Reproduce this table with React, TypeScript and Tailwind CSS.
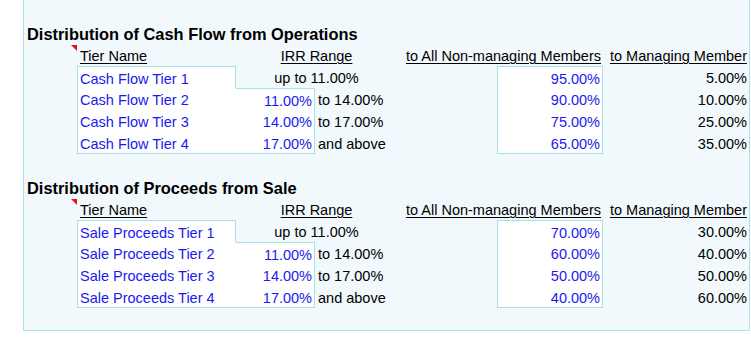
const blue = 'text-[#1a1aee]'

type Tier = { name: string; low: string | null; high: string; members: string; manager: string }

const sections: { title: string; tiers: Tier[] }[] = [
  {
    title: 'Distribution of Cash Flow from Operations',
    tiers: [
      { name: 'Cash Flow Tier 1', low: null, high: 'up to 11.00%', members: '95.00%', manager: '5.00%' },
      { name: 'Cash Flow Tier 2', low: '11.00%', high: 'to 14.00%', members: '90.00%', manager: '10.00%' },
      { name: 'Cash Flow Tier 3', low: '14.00%', high: 'to 17.00%', members: '75.00%', manager: '25.00%' },
      { name: 'Cash Flow Tier 4', low: '17.00%', high: 'and above', members: '65.00%', manager: '35.00%' },
    ],
  },
  {
    title: 'Distribution of Proceeds from Sale',
    tiers: [
      { name: 'Sale Proceeds Tier 1', low: null, high: 'up to 11.00%', members: '70.00%', manager: '30.00%' },
      { name: 'Sale Proceeds Tier 2', low: '11.00%', high: 'to 14.00%', members: '60.00%', manager: '40.00%' },
      { name: 'Sale Proceeds Tier 3', low: '14.00%', high: 'to 17.00%', members: '50.00%', manager: '50.00%' },
      { name: 'Sale Proceeds Tier 4', low: '17.00%', high: 'and above', members: '40.00%', manager: '60.00%' },
    ],
  },
]

// every cell is one spreadsheet row: 22px
const cell = 'h-[22px] pt-[2px] leading-[20px] whitespace-nowrap'
const line = 'border-[#a9dfe8]'

function Blank() {
  return <div className="col-span-7 h-[22px]" />
}

function Section({ title, tiers }: { title: string; tiers: Tier[] }) {
  return (
    <>
      <div className={`${cell} col-span-7 pl-[3px] text-[16.4px] font-bold text-black`}>{title}</div>

      {/* header row */}
      <div className={`${cell} relative`}>
        <span className="absolute right-0 top-[1px] border-l-[6px] border-t-[6px] border-l-transparent border-t-[#e8101a]" />
      </div>
      <div className={`${cell} pl-[3px]`}>
        <span className="underline decoration-1 underline-offset-[2px]">Tier Name</span>
      </div>
      <div className={`${cell} col-span-2 text-center`}>
        <span className="underline decoration-1 underline-offset-[2px]">IRR Range</span>
      </div>
      <div className={`${cell} col-span-2 pr-[2px] text-right`}>
        <span className="underline decoration-1 underline-offset-[2px]">to All Non-managing Members</span>
      </div>
      <div className={`${cell} pr-[2px] text-right`}>
        <span className="underline decoration-1 underline-offset-[2px]">to Managing Member</span>
      </div>

      {tiers.map((t, i) => {
        const first = i === 0
        const last = i === tiers.length - 1
        return (
          <div key={t.name} className="contents">
            <div className={cell} />
            <div
              className={`${cell} ${line} bg-white pl-[2px] ${blue} border-l ${first ? 'border-t border-r' : ''} ${last ? 'border-b' : ''}`}
            >
              {t.name}
            </div>
            {first ? (
              <div className={`${cell} col-span-2 text-center`}>{t.high}</div>
            ) : (
              <>
                <div
                  className={`${cell} ${line} bg-white pr-[2px] text-right ${blue} border-r ${i === 1 ? 'border-t' : ''} ${last ? 'border-b' : ''}`}
                >
                  {t.low}
                </div>
                <div className={`${cell} pl-[3px]`}>{t.high}</div>
              </>
            )}
            <div className={cell} />
            <div
              className={`${cell} ${line} bg-white pr-[2px] text-right ${blue} border-l border-r ${first ? 'border-t' : ''} ${last ? 'border-b' : ''}`}
            >
              {t.members}
            </div>
            <div className={`${cell} pr-[2px] text-right`}>{t.manager}</div>
          </div>
        )
      })}
    </>
  )
}

export default function App() {
  return (
    <div className="h-[353px] w-[751px] bg-white font-['Liberation_Sans',Arial,sans-serif] text-[14.5px] text-black">
      <div className="ml-[23px] w-[727px] border-b border-l border-r border-[#a9e2ec] bg-[#f1f9fc]">
        <div className="grid grid-cols-[53px_159px_79px_82px_100px_106px_146px]">
          <Blank />
          <Section {...sections[0]} />
          <Blank />
          <Section {...sections[1]} />
          <Blank />
        </div>
      </div>
    </div>
  )
}
